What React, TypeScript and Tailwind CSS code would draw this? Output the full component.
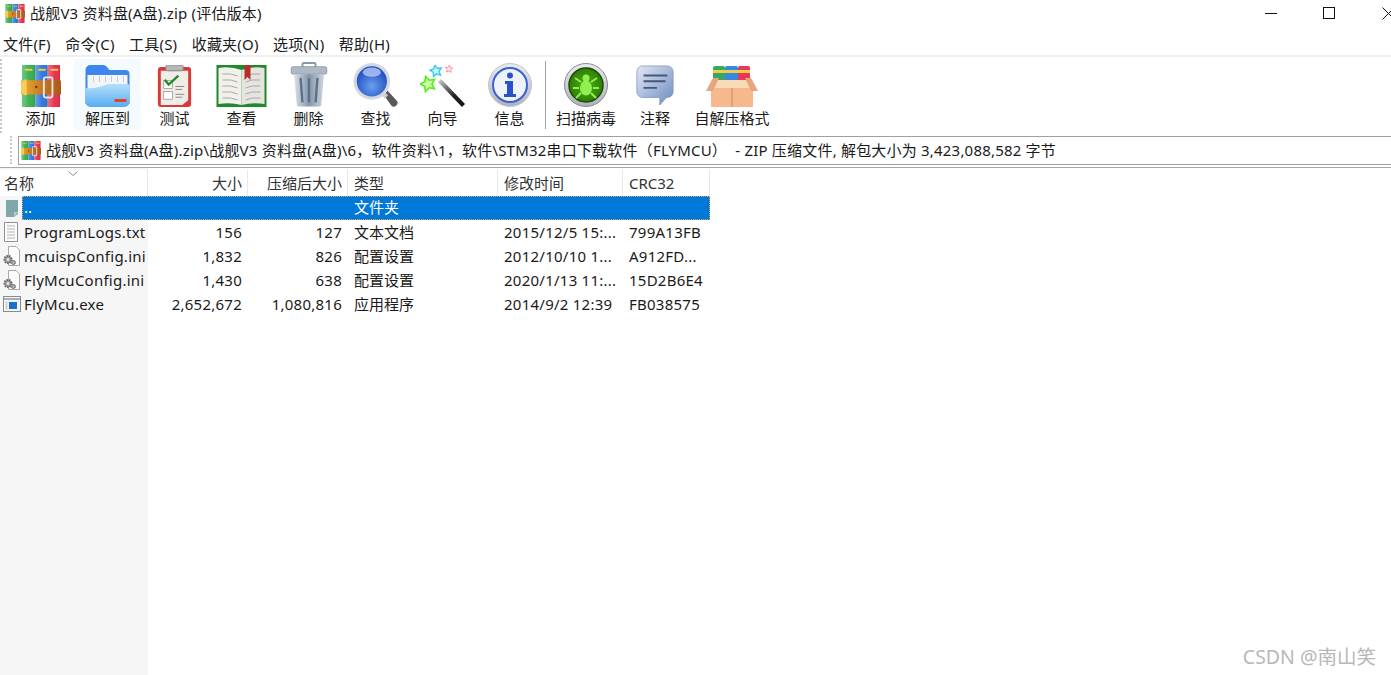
import { ReactNode } from "react";

const FONT = "font-['Noto_Sans','Noto_Sans_CJK_SC',sans-serif]";

// five pointed star, for the wand icon
const star = (cx: number, cy: number, r: number, rot = 0) =>
  Array.from({ length: 10 }, (_, i) => {
    const a = (Math.PI / 5) * i - Math.PI / 2 + rot;
    const d = i % 2 ? r * 0.5 : r;
    return `${(cx + d * Math.cos(a)).toFixed(1)},${(cy + d * Math.sin(a)).toFixed(1)}`;
  }).join(" ");

const RarIcon = ({ width = 40, height = 42 }: { width?: number; height?: number }) => (
  <svg width={width} height={height} viewBox="3 2 42 44" preserveAspectRatio="none">
    <defs>
      <linearGradient id="belt" x1="0" y1="0" x2="1" y2="0">
        <stop offset="0" stopColor="#f0b030" />
        <stop offset="0.5" stopColor="#c87a20" />
        <stop offset="1" stopColor="#a85a18" />
      </linearGradient>
      <linearGradient id="shine" x1="0" y1="0" x2="1" y2="0">
        <stop offset="0" stopColor="#fff" stopOpacity="0.3" />
        <stop offset="0.6" stopColor="#fff" stopOpacity="0" />
        <stop offset="1" stopColor="#000" stopOpacity="0.12" />
      </linearGradient>
    </defs>
    <rect x="4" y="2" width="14" height="44" rx="1" fill="#38b050" />
    <rect x="18" y="2" width="13" height="44" rx="1" fill="#2f78dc" />
    <rect x="31" y="2" width="13" height="44" rx="1" fill="#e8304c" />
    <rect x="4" y="2" width="14" height="44" fill="url(#shine)" />
    <rect x="18" y="2" width="13" height="44" fill="url(#shine)" />
    <rect x="31" y="2" width="13" height="44" fill="url(#shine)" />
    <rect x="7" y="6" width="8" height="2" fill="#e8d048" />
    <rect x="21" y="6" width="8" height="2" fill="#e8d048" />
    <rect x="34" y="6" width="8" height="2" fill="#e8d048" />
    <rect x="3" y="18" width="42" height="15" rx="1" fill="url(#belt)" />
    <path d="M9 17 a7 8.5 0 0 0 0 17z" fill="#f6cf58" />
    <rect x="27" y="15" width="9" height="21" rx="1.5" fill="none" stroke="#e4e4e4" strokeWidth="2" />
    <circle cx="19" cy="25" r="1.2" fill="#4a2c10" />
  </svg>
);

const FolderIcon = () => (
  <svg width="45" height="42" viewBox="2 5 44 42">
    <defs>
      <linearGradient id="fold" x1="0" y1="0" x2="0" y2="1">
        <stop offset="0" stopColor="#b4e0fc" />
        <stop offset="1" stopColor="#58acf0" />
      </linearGradient>
    </defs>
    <path d="M2 10 a5 5 0 0 1 5-5 h13 a4 4 0 0 1 3 1.5 l3 3.5 h16 a4 4 0 0 1 4 4 v30 H2z" fill="#3d86ee" />
    <rect x="4" y="15" width="40" height="14" fill="#f3f5f8" />
    <path d="M10 16v6M16 16v6M22 16v6M28 16v6M34 16v6M40 16v6" stroke="#c6ccd6" />
    <path d="M2 28 Q14 29 24 24 H44 a2 2 0 0 1 2 2 V42 a5 5 0 0 1-5 5 H7 a5 5 0 0 1-5-5z" fill="url(#fold)" />
    <rect x="31" y="39" width="12" height="3" fill="#e0442c" />
  </svg>
);

const ClipboardIcon = () => (
  <svg width="35" height="42" viewBox="7 2 34 43">
    <rect x="7" y="4" width="34" height="41" rx="3" fill="#d83a3a" />
    <path d="M10 8 H38 V38 L32 43 H10z" fill="#f0ede6" />
    <rect x="15" y="2" width="18" height="6" rx="2" fill="#b8b8b8" stroke="#777" strokeWidth="0.7" />
    <rect x="13" y="18" width="9" height="8" fill="#fff" stroke="#888" strokeWidth="0.7" />
    <rect x="13" y="29" width="9" height="8" fill="#fff" stroke="#888" strokeWidth="0.7" />
    <path d="M14 17 l4 5 l10-9" fill="none" stroke="#1f8a2e" strokeWidth="2.4" />
    <path d="M25 24h9M25 27h7M25 32h9M25 35h7" stroke="#888" strokeWidth="1" />
  </svg>
);

const BookIcon = () => (
  <svg width="51" height="42" viewBox="0 3 50 42">
    <path d="M0 3 H50 V45 H0z" fill="#1f8a2c" />
    <path d="M2 6 Q14 4 25 8 V43 Q14 40 2 42z" fill="#f2f0ea" />
    <path d="M48 6 Q36 4 25 8 V43 Q36 40 48 42z" fill="#e6e4de" />
    <path d="M6 12 q9 -1 15 2 M6 18 q9 -1 15 2 M6 24 q9 -1 15 2 M6 30 q9 -1 15 2 M6 36 q9 -1 15 2 M44 12 q-9 -1 -15 2 M44 18 q-9 -1 -15 2 M44 24 q-9 -1 -15 2 M44 30 q-9 -1 -15 2 M44 36 q-9 -1 -15 2" stroke="#a8a8a8" fill="none" />
    <path d="M28 3 h6 v15 l-3 -3 l-3 3z" fill="#b82c2c" />
  </svg>
);

const TrashIcon = () => (
  <svg width="38" height="45" viewBox="0 0 40 48">
    <defs>
      <linearGradient id="bin" x1="0" y1="0" x2="1" y2="0">
        <stop offset="0" stopColor="#dbe2ea" />
        <stop offset="0.5" stopColor="#8496ad" />
        <stop offset="1" stopColor="#cfd6de" />
      </linearGradient>
    </defs>
    <rect x="13" y="1" width="14" height="5" rx="1.5" fill="none" stroke="#8a97a6" strokeWidth="2" />
    <rect x="1" y="5" width="38" height="8" rx="2" fill="#aeb9c6" stroke="#7c8896" strokeWidth="0.7" />
    <path d="M4 13 H36 L33 46 a2 2 0 0 1 -2 1.5 H9 a2 2 0 0 1 -2 -1.5z" fill="url(#bin)" />
    <path d="M11 17 L13 43 M20 17 V43 M29 17 L27 43" stroke="#5e6f86" strokeWidth="2.5" />
  </svg>
);

const SearchIcon = () => (
  <svg width="45" height="44" viewBox="0 0 48 48">
    <defs>
      <radialGradient id="lens" cx="0.5" cy="0.65" r="0.6">
        <stop offset="0" stopColor="#6aa0f0" />
        <stop offset="1" stopColor="#1f4cc0" />
      </radialGradient>
    </defs>
    <path d="M33 35 L37 30 L47 41 a3.5 3.5 0 0 1 -6 5z" fill="#585858" />
    <path d="M31 32 L36 37" stroke="#cfcfcf" strokeWidth="5" />
    <circle cx="20" cy="20" r="20" fill="#d4d8de" />
    <circle cx="20" cy="20" r="16.5" fill="url(#lens)" />
    <ellipse cx="20" cy="10" rx="10" ry="5" fill="#b4cbf5" opacity="0.8" />
  </svg>
);

const WandIcon = () => (
  <svg width="45" height="42" viewBox="0 0 45 42">
    <defs>
      <linearGradient id="wand" x1="0" y1="0" x2="1" y2="1">
        <stop offset="0" stopColor="#d8d8d8" />
        <stop offset="0.3" stopColor="#777" />
        <stop offset="0.6" stopColor="#222" />
        <stop offset="1" stopColor="#111" />
      </linearGradient>
    </defs>
    <path d="M18 17 L21 14 L45 39 L42 42z" fill="url(#wand)" />
    <polygon points={star(8, 19, 8, -0.3)} fill="#c8ff9c" stroke="#5ce820" strokeWidth="1.6" />
    <polygon points={star(16, 6, 6, -0.2)} fill="#c8f6ff" stroke="#38c8f0" strokeWidth="1.4" />
    <polygon points={star(29, 4, 4, 0.1)} fill="#ffe4e8" stroke="#f89aa8" strokeWidth="1" />
  </svg>
);

const InfoIcon = () => (
  <svg width="44" height="44" viewBox="0 0 44 44">
    <defs>
      <linearGradient id="ring" x1="0" y1="0" x2="0" y2="1">
        <stop offset="0" stopColor="#e8ebf2" />
        <stop offset="1" stopColor="#aeb2bc" />
      </linearGradient>
    </defs>
    <circle cx="22" cy="22" r="21.5" fill="url(#ring)" stroke="#c0c4cc" />
    <circle cx="22" cy="22" r="17" fill="#eef2fb" stroke="#3a62d0" strokeWidth="2" />
    <circle cx="22" cy="12.5" r="3" fill="#2a52c8" />
    <path d="M17 18 h8 v13 h3 v3 H16 v-3 h3 v-10 h-2z" fill="#2a52c8" />
  </svg>
);

const ScanIcon = () => (
  <svg width="44" height="44" viewBox="0 0 44 44">
    <defs>
      <radialGradient id="scan" cx="0.5" cy="0.5" r="0.55">
        <stop offset="0" stopColor="#4cb010" />
        <stop offset="1" stopColor="#2a7a06" />
      </radialGradient>
    </defs>
    <circle cx="22" cy="22" r="21.5" fill="url(#ring)" stroke="#8a8a8a" />
    <circle cx="22" cy="22" r="17" fill="url(#scan)" stroke="#1f4a06" strokeWidth="1.5" />
    <ellipse cx="22" cy="25" rx="6" ry="7.5" fill="#90f050" />
    <circle cx="22" cy="15" r="3.5" fill="#90f050" />
    <path d="M17 19 L11 15 M27 19 L33 15 M15 25 H9 M29 25 H35 M17 30 L12 35 M27 30 L32 35" stroke="#90f050" strokeWidth="2" />
  </svg>
);

const NoteIcon = () => (
  <svg width="40" height="42" viewBox="0 0 40 44">
    <defs>
      <linearGradient id="note" x1="0" y1="0" x2="1" y2="1">
        <stop offset="0" stopColor="#e2e8f4" />
        <stop offset="1" stopColor="#6c8ac0" />
      </linearGradient>
    </defs>
    <path d="M7 1 H33 a6 6 0 0 1 6 6 V28 a6 6 0 0 1 -6 6 H32 L25 42 V34 H7 a6 6 0 0 1 -6 -6 V7 a6 6 0 0 1 6 -6z" fill="url(#note)" stroke="#7c93bc" strokeWidth="0.8" />
    <path d="M8 11 H33 M8 17 H31 M8 24 H22" stroke="#46567a" strokeWidth="2" />
  </svg>
);

const BoxIcon = () => (
  <svg width="52" height="41" viewBox="0 0 52 41">
    <path d="M7 2 a2 2 0 0 1 2-2 H17 a2 2 0 0 1 2 2 V20 H7z" fill="#38a860" />
    <path d="M19 2 a2 2 0 0 1 2-2 H30 a2 2 0 0 1 2 2 V20 H19z" fill="#3888e0" />
    <path d="M32 2 a2 2 0 0 1 2-2 H42 a2 2 0 0 1 2 2 V20 H32z" fill="#e83858" />
    <rect x="7" y="4" width="37" height="3" fill="#eed048" />
    <path d="M5 17 H47 V41 H5z" fill="#f6b88c" />
    <path d="M5 14 H47 V22 H5z" fill="#f8dcb8" />
    <path d="M0 25 L7 12 H13 L7 25z M52 25 L45 12 H39 L45 25z" fill="#e8a47c" />
    <path d="M26 22 V41" stroke="#c88a62" />
  </svg>
);

const ToolButton = ({
  icon,
  label,
  width = "w-[67px]",
  active = false,
}: {
  icon: ReactNode;
  label: string;
  width?: string;
  active?: boolean;
}) => (
  <div className={`${width} h-[71px] flex flex-col items-center ${active ? "bg-[#f5faff]" : ""}`}>
    <div className="h-[48px] shrink-0 flex items-end justify-center">{icon}</div>
    <span className="mt-[1px] leading-[20px] text-[15px] text-[#1a1a1a] whitespace-nowrap">{label}</span>
  </div>
);

const Grip = ({ className = "" }: { className?: string }) => (
  <div className={`w-[2px] border-l-2 border-dotted border-[#c8c8c8] ${className}`} />
);

const TextFileIcon = () => (
  <svg width="16" height="20" viewBox="0 0 16 20">
    <path d="M1.5 .5 H14.5 V19.5 H1.5z" fill="#fcfcfc" stroke="#909090" />
    <path d="M4 4h8M4 7h8M4 10h8M4 13h8M4 16h8" stroke="#b0b0b0" />
  </svg>
);

const IniFileIcon = () => (
  <svg width="18" height="20" viewBox="0 0 18 20">
    <path d="M5.5 .5 H13 L16.5 4 V19.5 H5.5z" fill="#fcfcfc" stroke="#a8a8a8" />
    <circle cx="5" cy="13.5" r="3.6" fill="#a0a0a0" stroke="#686868" strokeDasharray="1.5 1" strokeWidth="2" />
    <circle cx="5" cy="13.5" r="1.2" fill="#f4f4f4" />
    <circle cx="10.5" cy="16.5" r="2" fill="#b0b0b0" stroke="#787878" />
  </svg>
);

const ExeFileIcon = () => (
  <svg width="18" height="16" viewBox="0 0 18 16">
    <rect x=".5" y=".5" width="17" height="15" fill="#f6f6f6" stroke="#8a8a8a" />
    <path d="M1 3H17" stroke="#a0b0c4" strokeWidth="2" />
    <rect x="2.5" y="5.5" width="2" height="8" fill="#d0d0d0" />
    <rect x="6" y="6" width="8" height="7" fill="#1a70d0" />
  </svg>
);

const UpFolderIcon = () => (
  <svg width="14" height="19" viewBox="0 0 14 19">
    <path d="M1 1 H13 V15 L9 18 H1z" fill="#7fa8a8" />
    <path d="M9 18 V13 H13z" fill="#b4cccc" />
  </svg>
);

const menus = ["文件(F)", "命令(C)", "工具(S)", "收藏夹(O)", "选项(N)", "帮助(H)"];

const columns = [
  { label: "大小", width: "w-[100px]", align: "text-right pr-[5px]" },
  { label: "压缩后大小", width: "w-[100px]", align: "text-right pr-[5px]" },
  { label: "类型", width: "w-[150px]", align: "pl-[6px]" },
  { label: "修改时间", width: "w-[125px]", align: "pl-[6px]" },
  { label: "CRC32", width: "w-[87px]", align: "pl-[6px]" },
];

const files = [
  { icon: <TextFileIcon />, name: "ProgramLogs.txt", size: "156", packed: "127", type: "文本文档", time: "2015/12/5 15:...", crc: "799A13FB" },
  { icon: <IniFileIcon />, name: "mcuispConfig.ini", size: "1,832", packed: "826", type: "配置设置", time: "2012/10/10 1...", crc: "A912FD..." },
  { icon: <IniFileIcon />, name: "FlyMcuConfig.ini", size: "1,430", packed: "638", type: "配置设置", time: "2020/1/13 11:...", crc: "15D2B6E4" },
  { icon: <ExeFileIcon />, name: "FlyMcu.exe", size: "2,652,672", packed: "1,080,816", type: "应用程序", time: "2014/9/2 12:39", crc: "FB038575" },
];

const FileRow = ({ icon, name, size, packed, type, time, crc }: (typeof files)[number]) => (
  <div className="flex h-[24px] leading-[24px] text-[15px] tracking-[0.25px] text-[#1a1a1a] whitespace-nowrap">
    <div className="w-[148px] flex overflow-hidden">
      <div className="w-[24px] shrink-0 flex items-center pl-[3px]">{icon}</div>
      <span>{name}</span>
    </div>
    <div className="w-[100px] text-right pr-[6px]">{size}</div>
    <div className="w-[100px] text-right pr-[6px]">{packed}</div>
    <div className="w-[150px] pl-[6px] tracking-normal">{type}</div>
    <div className="w-[125px] pl-[6px]">{time}</div>
    <div className="w-[87px] pl-[6px]">{crc}</div>
  </div>
);

export default function App() {
  return (
    <div className={`relative w-[1391px] h-[675px] overflow-hidden bg-white flex flex-col ${FONT}`}>
      {/* title bar */}
      <div className="h-[28px] shrink-0 flex items-center pl-[5px] pb-[2px]">
        <RarIcon width={20} height={19} />
        <span className="ml-[5px] text-[15px] tracking-[0.2px] text-[#1a1a1a] whitespace-nowrap">战舰V3 资料盘(A盘).zip (评估版本)</span>
        <div className="ml-auto flex items-center gap-[46px] mr-[-4px]">
          <svg width="12" height="12" viewBox="0 0 12 12">
            <path d="M0 6.5H12" stroke="#111" />
          </svg>
          <svg width="12" height="12" viewBox="0 0 12 12">
            <rect x=".5" y=".5" width="11" height="11" fill="none" stroke="#111" />
          </svg>
          <svg className="ml-[1px]" width="13" height="13" viewBox="0 0 13 13">
            <path d="M.5 .5L12.5 12.5M12.5 .5L.5 12.5" stroke="#111" />
          </svg>
        </div>
      </div>

      {/* menu */}
      <div className="h-[29px] shrink-0 flex items-center pt-[6px] pl-[3px] gap-[14.4px] text-[15px] tracking-[0.2px] text-[#1a1a1a] border-b-2 border-[#f0f0f0]">
        {menus.map((m) => (
          <span key={m} className="whitespace-nowrap">{m}</span>
        ))}
      </div>

      {/* toolbar */}
      <div className="h-[79px] shrink-0 flex items-start pt-[2px]">
        <Grip className="h-[74px] mr-[5px]" />
        <ToolButton icon={<RarIcon />} label="添加" />
        <ToolButton icon={<FolderIcon />} label="解压到" active />
        <ToolButton icon={<ClipboardIcon />} label="测试" />
        <ToolButton icon={<BookIcon />} label="查看" />
        <ToolButton icon={<TrashIcon />} label="删除" />
        <ToolButton icon={<SearchIcon />} label="查找" />
        <ToolButton icon={<WandIcon />} label="向导" />
        <ToolButton icon={<InfoIcon />} label="信息" />
        <div className="w-px h-[68px] mt-[2px] ml-[2px] mr-[3px] bg-[#a0a0a0]" />
        <ToolButton icon={<ScanIcon />} label="扫描病毒" width="w-[74px]" />
        <ToolButton icon={<NoteIcon />} label="注释" width="w-[64px]" />
        <ToolButton icon={<BoxIcon />} label="自解压格式" width="w-[90px]" />
      </div>

      {/* address bar */}
      <div className="h-[29px] shrink-0 flex items-stretch pl-[10px]">
        <Grip className="h-[28px] mr-[6px]" />
        <div className="flex-1 flex items-center pl-[2px] border border-r-0 border-[#a0a0a0] h-[29px]">
          <RarIcon width={20} height={19} />
          <span className="ml-[5px] text-[15px] tracking-[0.2px] text-[#1a1a1a] whitespace-pre">
            战舰V3 资料盘(A盘).zip\战舰V3 资料盘(A盘)\6，软件资料\1，软件\STM32串口下载软件（FLYMCU）  - ZIP 压缩文件, 解包大小为 3,423,088,582 字节
          </span>
        </div>
      </div>
      <div className="h-px mt-[2px] shrink-0 bg-[#a8a8a8]" />

      {/* file list */}
      <div className="flex-1 pt-[2px] bg-[linear-gradient(to_right,#f6f6f6_148px,#ffffff_148px)]">
        <div className="relative flex h-[26px] w-[710px] bg-white leading-[26px] text-[15px] text-[#333]">
          <div className="w-[148px] pl-[4px] border-r border-[#e8e8e8]">名称</div>
          {columns.map((c) => (
            <div key={c.label} className={`${c.width} ${c.align} border-r border-[#e8e8e8] whitespace-nowrap`}>
              {c.label}
            </div>
          ))}
          <svg className="absolute left-[68px] top-[1px]" width="10" height="5" viewBox="0 0 10 5">
            <path d="M.5 .5L5 4.5L9.5 .5" fill="none" stroke="#888" />
          </svg>
        </div>

        <div className="flex h-[24px] w-[710px] leading-[24px] text-[15px] text-white">
          <div className="w-[22px] shrink-0 flex items-center pl-[5px]">
            <UpFolderIcon />
          </div>
          <div className="flex-1 flex bg-[#0078d7] outline-1 outline-dotted outline-offset-[-1px] outline-[#e0a060]">
            <div className="w-[126px] pl-[2px] leading-[22px]">..</div>
            <div className="w-[200px]" />
            <div className="pl-[6px] leading-[22px]">文件夹</div>
          </div>
        </div>

        {files.map((f) => (
          <FileRow key={f.name} {...f} />
        ))}
      </div>

      <div className="absolute right-[15px] bottom-[5px] text-[19.5px] leading-[26px] text-[#b8b8b8]">CSDN @南山笑</div>
    </div>
  );
}
